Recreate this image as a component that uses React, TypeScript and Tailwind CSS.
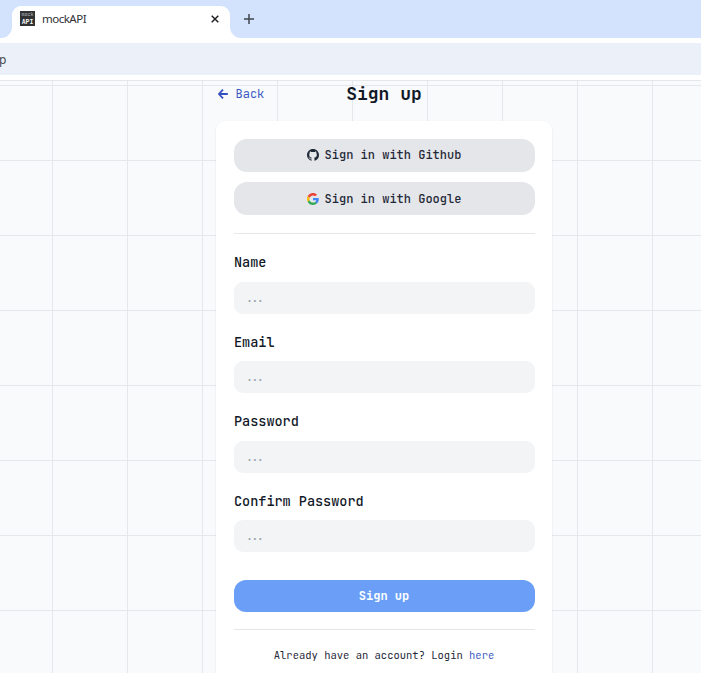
import React from "react";

const mono = "font-['JetBrains_Mono','DejaVu_Sans_Mono',monospace]";

function GithubIcon() {
  return (
    <svg viewBox="0 0 16 16" className="size-3 shrink-0" fill="#1f2937">
      <path d="M8 0C3.58 0 0 3.58 0 8c0 3.54 2.29 6.53 5.47 7.59.4.07.55-.17.55-.38 0-.19-.01-.82-.01-1.49-2.01.37-2.53-.49-2.69-.94-.09-.23-.48-.94-.82-1.13-.28-.15-.68-.52-.01-.53.63-.01 1.08.58 1.23.82.72 1.21 1.87.87 2.33.66.07-.52.28-.87.51-1.07-1.78-.2-3.64-.89-3.64-3.95 0-.87.31-1.59.82-2.15-.08-.2-.36-1.02.08-2.12 0 0 .67-.21 2.2.82.64-.18 1.32-.27 2-.27s1.36.09 2 .27c1.53-1.04 2.2-.82 2.2-.82.44 1.1.16 1.92.08 2.12.51.56.82 1.27.82 2.15 0 3.07-1.87 3.75-3.65 3.95.29.25.54.73.54 1.48 0 1.07-.01 1.93-.01 2.2 0 .21.15.46.55.38A8.01 8.01 0 0 0 16 8c0-4.42-3.58-8-8-8z" />
    </svg>
  );
}

function GoogleIcon() {
  return (
    <svg viewBox="0 0 48 48" className="size-3 shrink-0">
      <path fill="#ea4335" d="M24 9.5c3.54 0 6.71 1.22 9.21 3.6l6.85-6.85C35.9 2.38 30.47 0 24 0 14.62 0 6.51 5.38 2.56 13.22l7.98 6.19C12.43 13.72 17.74 9.5 24 9.5z" />
      <path fill="#4285f4" d="M46.98 24.55c0-1.57-.15-3.09-.38-4.55H24v9.02h12.94c-.58 2.96-2.26 5.48-4.78 7.18l7.73 6c4.51-4.18 7.09-10.36 7.09-17.65z" />
      <path fill="#fbbc05" d="M10.53 28.59A14.5 14.5 0 0 1 9.77 24c0-1.6.27-3.14.76-4.59l-7.98-6.19A23.9 23.9 0 0 0 0 24c0 3.88.92 7.54 2.56 10.78l7.97-6.19z" />
      <path fill="#34a853" d="M24 48c6.48 0 11.93-2.13 15.89-5.81l-7.73-6c-2.15 1.45-4.92 2.3-8.16 2.3-6.26 0-11.57-4.22-13.47-9.91l-7.98 6.19C6.51 42.62 14.62 48 24 48z" />
    </svg>
  );
}

function BrowserChrome() {
  return (
    <header className="shrink-0 bg-white font-['Noto_Sans','Open_Sans',sans-serif]">
      <div className="flex h-[38px] bg-[#d3e2fd]">
        <div className="w-3 bg-white">
          <div className="h-full rounded-br-[11px] bg-[#d3e2fd]" />
        </div>
        <div className="flex w-[218px] bg-[#d3e2fd]">
          <div className="mt-1.5 flex flex-1 items-center rounded-t-[9px] bg-white pr-[11px] pb-[7px] pl-2">
            <div className={`${mono} flex size-[15px] flex-col items-center justify-center bg-[#303234]`}>
              <span className="text-[5px] leading-[7px] text-[#b5b7b9]">mock</span>
              <span className="text-[6.5px] leading-[8px] font-bold text-white">API</span>
            </div>
            <span className="ml-[7px] flex-1 text-[11.5px] leading-4 tracking-[-0.5px] text-[#303236]">mockAPI</span>
            <svg viewBox="0 0 8 8" className="size-2" stroke="#202124" strokeWidth="1.5" fill="none">
              <path d="M.7.7l6.6 6.6M7.3.7L.7 7.3" />
            </svg>
          </div>
        </div>
        <div className="flex flex-1 bg-white">
          <div className="flex flex-1 rounded-bl-[11px] bg-[#d3e2fd] pt-3.5 pl-3.5">
            <svg viewBox="0 0 10 10" className="size-2.5" stroke="#42464d" strokeWidth="1.5" fill="none">
              <path d="M5 0v10M0 5h10" />
            </svg>
          </div>
        </div>
      </div>
      <div className="mt-[5px] mb-[5px] flex h-8 items-center bg-[#ebf0f9]">
        <span className="-ml-px pt-0.5 text-[12px] text-[#44474c]">p</span>
      </div>
    </header>
  );
}

function SocialButton({ icon, label, className }: { icon: React.ReactNode; label: string; className: string }) {
  return (
    <button
      className={`flex h-[33px] w-full items-center justify-center gap-1.5 rounded-[13px] bg-[#e5e6ea] text-[12px] font-medium text-[#1f2937] ${className}`}
    >
      {icon}
      <span>{label}</span>
    </button>
  );
}

function Field({ label }: { label: string }) {
  return (
    <label className="mb-[18.1px] block">
      <span className="block h-5 pl-[0.5px] text-[13.5px] leading-5 font-medium text-[#111827]">{label}</span>
      <input
        placeholder="..."
        className="mt-[9.5px] block h-8 w-full rounded-[9px] bg-[#f3f4f6] px-3 text-[10.5px] outline-none placeholder:font-bold placeholder:text-[#9ca3af]"
      />
    </label>
  );
}

export default function App() {
  return (
    <div className="flex h-[673px] w-full flex-col overflow-hidden bg-white">
      <BrowserChrome />
      <main
        className={`${mono} flex-1 overflow-hidden border-t border-[#e5e7eb] bg-[#f9fafb] bg-[linear-gradient(to_right,#e5e7eb_1px,transparent_1px),linear-gradient(to_bottom,#e5e7eb_1px,transparent_1px)] bg-[size:75px_75px] bg-[position:52px_4px]`}
      >
        <div className="mr-[149px] ml-[216px]">
          <div className="grid h-10 grid-cols-3 items-start pt-[3px]">
            <a className="mt-0.5 flex items-center gap-2 text-[12px] leading-4 text-[#3d5bc4]">
              <svg viewBox="0 0 10 10" className="-mt-px ml-[1.5px] size-2.5" fill="none" stroke="#3450be" strokeWidth="1.8">
                <path d="M9.8 5H1M5 .6L.9 5 5 9.4" />
              </svg>
              Back
            </a>
            <h1 className="text-center text-[18px] leading-5 font-semibold text-[#111827]">Sign up</h1>
          </div>
          <section className="h-[600px] rounded-[9px] bg-white px-[17.5px] pt-[18px] shadow-[0_1px_3px_rgba(0,0,0,0.08)]">
            <div className="flex flex-col gap-2.5">
              <SocialButton icon={<GithubIcon />} label="Sign in with Github" className="pb-[1.5px]" />
              <SocialButton icon={<GoogleIcon />} label="Sign in with Google" className="pb-0" />
            </div>
            <hr className="mt-[18px] mb-[18px] border-[#e5e7eb]" />
            <Field label="Name" />
            <Field label="Email" />
            <Field label="Password" />
            <Field label="Confirm Password" />
            <button className="mt-[27.4px] block h-8 w-full rounded-[12px] bg-[#6b9ff7] text-[12px] font-bold text-white">
              Sign up
            </button>
            <hr className="mt-[17.6px] mb-[17px] border-[#e5e7eb]" />
            <p className="text-center text-[10.5px] leading-4 text-[#1f2937]">
              Already have an account? Login <a className="text-[#3d5bc4]">here</a>
            </p>
          </section>
        </div>
      </main>
    </div>
  );
}
